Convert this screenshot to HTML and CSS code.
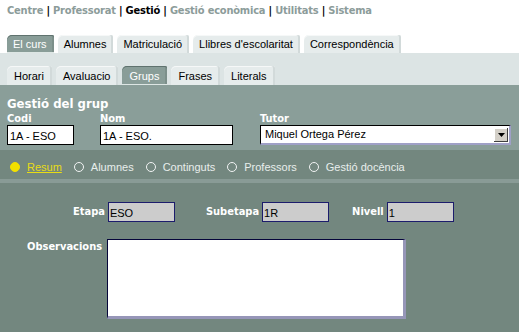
FILE: index.html
```html
<!DOCTYPE html>
<html lang="ca">
<head>
  <meta charset="UTF-8">
  <title>Gestió del grup</title>
  <link rel="stylesheet" href="styles.css">
</head>
<body>
<div class="topnav">
  <a>Centre</a> | <a>Professorat</a> | <a class="current">Gestió</a> | <a>Gestió econòmica</a> | <a>Utilitats</a> | <a>Sistema</a>
</div>

<div class="tabs tabs-main">
  <span class="tab active">El curs</span>
  <span class="tab">Alumnes</span>
  <span class="tab">Matriculació</span>
  <span class="tab">Llibres d'escolaritat</span>
  <span class="tab">Correspondència</span>
</div>

<div class="subbar">
  <div class="tabs tabs-sub">
    <span class="tab">Horari</span>
    <span class="tab">Avaluacio</span>
    <span class="tab active">Grups</span>
    <span class="tab">Frases</span>
    <span class="tab">Literals</span>
  </div>
</div>

<div class="group-head">
  <h1>Gestió del grup</h1>
  <div class="head-fields">
    <label class="field field-codi">
      <span>Codi</span>
      <input type="text" value="1A - ESO">
    </label>
    <label class="field field-nom">
      <span>Nom</span>
      <input type="text" value="1A - ESO.">
    </label>
    <label class="field field-tutor">
      <span>Tutor</span>
      <div class="select">
        <span class="select-value">Miquel Ortega Pérez</span>
        <span class="select-btn">
          <svg width="7" height="4" viewBox="0 0 7 4"><path d="M0 0h7L3.5 4z" fill="#000"/></svg>
        </span>
      </div>
    </label>
  </div>
</div>

<div class="radios">
  <span class="radio selected"><i></i><u>Resum</u></span>
  <span class="radio"><i></i>Alumnes</span>
  <span class="radio"><i></i>Continguts</span>
  <span class="radio"><i></i>Professors</span>
  <span class="radio"><i></i>Gestió docència</span>
</div>

<div class="content">
  <div class="row">
    <label class="inline etapa"><span>Etapa</span><input type="text" class="ro" value="ESO" readonly></label>
    <label class="inline subetapa"><span>Subetapa</span><input type="text" class="ro" value="1R" readonly></label>
    <label class="inline nivell"><span>Nivell</span><input type="text" class="ro" value="1" readonly></label>
  </div>
  <div class="row obs">
    <span class="obs-label">Observacions</span>
    <textarea></textarea>
  </div>
</div>
</body>
</html>
```

FILE: styles.css
```css
body {
  margin: 0;
  background: #73877f;
  font-family: 'Liberation Sans', Arial, sans-serif;
  font-size: 11px;
  color: #000;
  height: 332px;
  overflow: hidden;
}

.topnav {
  background: #fff;
  padding: 4px 0 0 7px;
  height: 32px;
  box-sizing: border-box;
  font-family: 'DejaVu Sans Condensed', 'DejaVu Sans', sans-serif;
  font-weight: bold;
  font-size: 11px;
  letter-spacing: -0.2px;
  color: #000;
  line-height: 14px;
}

.topnav a {
  color: #8c9c9a;
}

.topnav a.current {
  color: #000;
}

.tabs {
  display: flex;
  gap: 4px;
  padding-left: 7px;
}

.tabs-main {
  background: #fff;
  padding-top: 3px;
  height: 21px;
  box-sizing: border-box;
  align-items: flex-end;
}

.tab {
  display: block;
  height: 18px;
  line-height: 19px;
  padding: 0 7px 0 6px;
  background: #e6ecec;
  border-top-left-radius: 5px;
  border-top-right-radius: 2px;
  box-shadow: inset -2px 0 0 #d2dada, inset 0 1px 0 #f6f8f8;
  color: #000;
}

.tab.active {
  background: #899d98;
  color: #fff;
  box-shadow: inset 0 1px 0 #5f726e, inset 0 -1px 0 #dde6e4, inset -2px 0 0 #7c8f8a;
}

.subbar {
  background: #dce4e4;
  height: 32px;
  box-sizing: border-box;
  padding-top: 13px;
}

.tabs-sub .tab {
  height: 19px;
  line-height: 20px;
  padding: 0 8px 0 7px;
}

.group-head {
  background: #8a9e99;
  height: 65px;
  box-sizing: border-box;
  padding: 11px 0 0 7px;
  color: #fff;
}

.group-head h1 {
  margin: 0;
  font-family: 'DejaVu Sans Condensed', 'DejaVu Sans', sans-serif;
  font-size: 13px;
  font-weight: bold;
  line-height: 15px;
}

.head-fields {
  display: flex;
  margin-top: 2px;
}

.field {
  display: flex;
  flex-direction: column;
}

.field > span,
.inline > span,
.obs-label {
  font-family: 'DejaVu Sans Condensed', 'DejaVu Sans', sans-serif;
  font-weight: bold;
  font-size: 11px;
  line-height: 12px;
  color: #fff;
}

input,
textarea {
  font-family: 'Liberation Sans', Arial, sans-serif;
  font-size: 11px;
  margin: 0;
  outline: none;
}

.field input {
  height: 20px;
  box-sizing: border-box;
  border: 1px solid #000;
  background: #fff;
  padding: 1px 2px 0;
}

.field-codi input {
  width: 67px;
}

.field-nom {
  margin-left: 26px;
}

.field-nom input {
  width: 133px;
}

.field-tutor {
  margin-left: 27px;
}

.select {
  display: flex;
  align-items: center;
  width: 251px;
  height: 20px;
  box-sizing: border-box;
  background: #fff;
  border: 1px solid #000;
  border-right: 2px solid #9fa0c6;
  border-bottom: 2px solid #9fa0c6;
  color: #000;
}

.select-value {
  flex: 1;
  padding-left: 4px;
  line-height: 17px;
}

.select-btn {
  display: flex;
  align-items: center;
  justify-content: center;
  width: 14px;
  height: 14px;
  margin-right: 1px;
  background: #d4d0c8;
  box-shadow: inset -1px -1px 0 #404040, inset 1px 1px 0 #fff;
}

.radios {
  display: flex;
  align-items: center;
  height: 25px;
  padding: 4px 0 0 10px;
  border-bottom: 4px solid #899b96;
  color: #e8eeec;
}

.radio {
  display: flex;
  align-items: center;
  margin-right: 12px;
}

.radio i {
  display: block;
  width: 8px;
  height: 8px;
  border: 1px solid #f2f4f4;
  border-radius: 50%;
  margin-right: 7px;
}

.radio.selected {
  color: #e8dc14;
}

.radio.selected i {
  background: #f2e000;
  border-color: #f2e000;
}

.content {
  padding-top: 19px;
}

.row {
  display: flex;
  align-items: center;
}

.inline {
  display: flex;
  align-items: center;
}

.inline > span {
  margin-right: 3px;
}

.etapa {
  margin-left: 73px;
}

.subetapa {
  margin-left: 31px;
}

.nivell {
  margin-left: 23px;
}

input.ro {
  width: 67px;
  height: 20px;
  box-sizing: border-box;
  border: 1px solid #1c1c6c;
  background: #cccccc;
  padding: 1px 1px 0;
  color: #000;
}

.obs {
  align-items: flex-start;
  margin-top: 17px;
}

.obs-label {
  margin-left: 27px;
  margin-right: 5px;
  margin-top: 2px;
}

textarea {
  width: 299px;
  height: 80px;
  box-sizing: border-box;
  resize: none;
  background: #fff;
  border-style: solid;
  border-width: 1px 3px 3px 1px;
  border-color: #05053a #9696b8 #9696b8 #05053a;
}
```
